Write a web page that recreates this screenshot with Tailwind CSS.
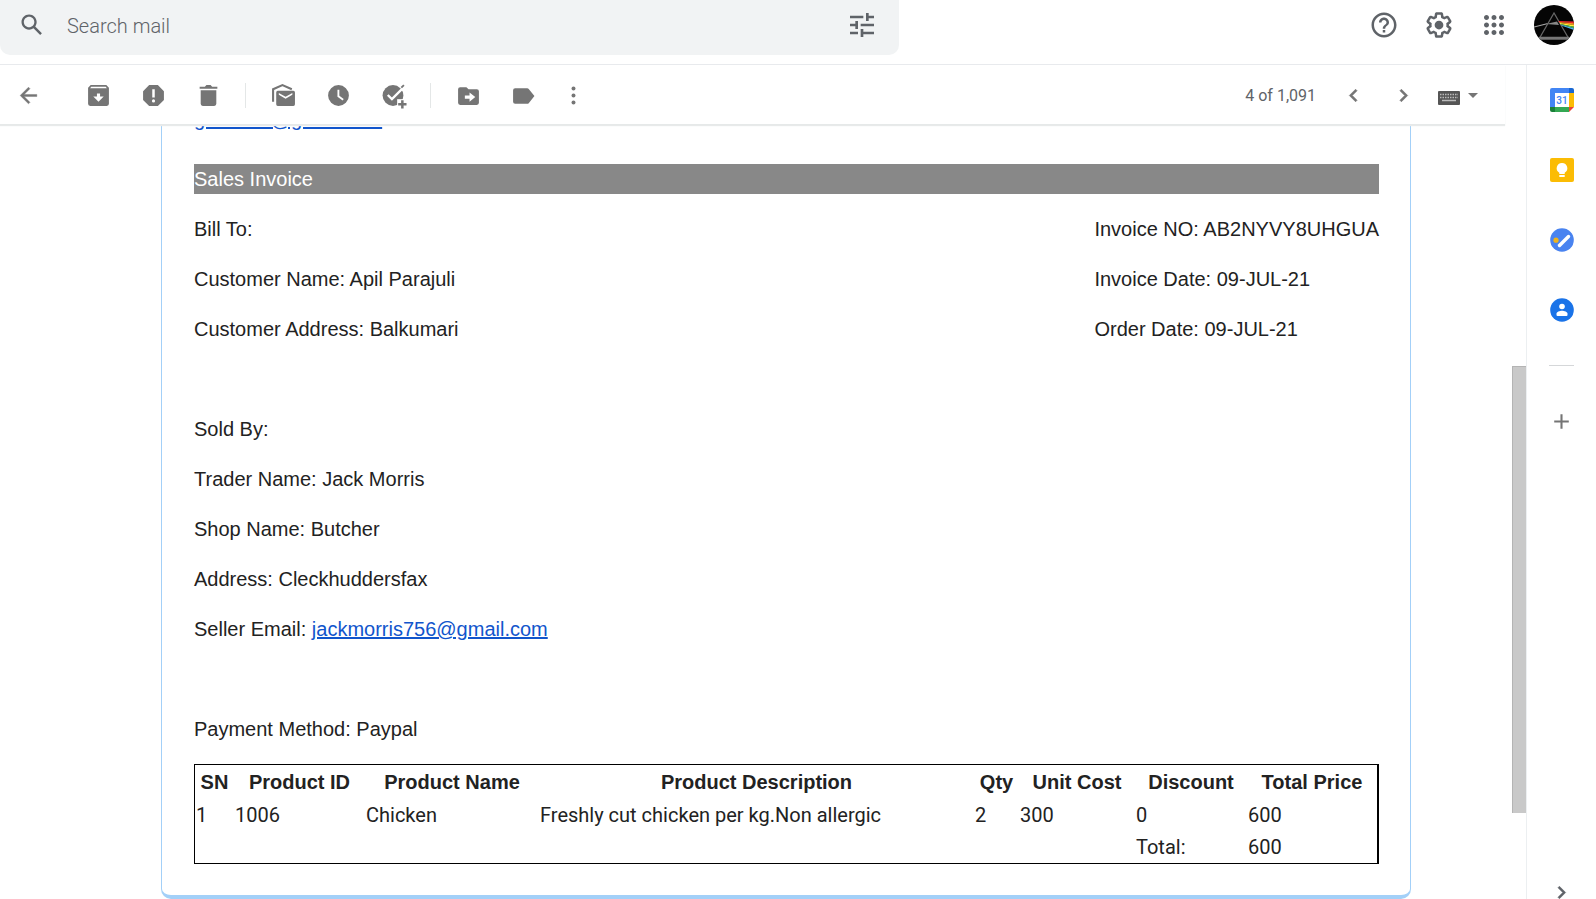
<!DOCTYPE html>
<html lang="en">
<head>
<meta charset="utf-8">
<title>Sales Invoice</title>
<script src="https://cdn.jsdelivr.net/npm/@tailwindcss/browser@4"></script>
</head>
<body class="flex h-screen flex-col overflow-hidden bg-white font-['Liberation_Sans',Arial,sans-serif] text-xl leading-[30px] text-[#222222]">

<header class="flex h-[65px] shrink-0 items-start justify-between border-b border-[#e8eaed] pr-[22px]">
  <form class="flex h-[55px] w-[899px] items-center rounded-b-[10px] bg-[#f1f3f4] pr-5 pl-[18px]">
    <button type="button" aria-label="Search" class="mb-1.5 text-[#5f6368]"><svg class="size-7 fill-current" viewBox="0 0 24 24"><path d="M20.49 19l-5.73-5.73C15.53 12.2 16 10.91 16 9.5 16 5.91 13.09 3 9.5 3S3 5.91 3 9.5 5.91 16 9.5 16c1.41 0 2.7-.47 3.77-1.24L19 20.49 20.49 19zM5 9.5C5 7.01 7.01 5 9.5 5S14 7.01 14 9.5 11.99 14 9.5 14 5 11.99 5 9.5z"/></svg></button>
    <input type="text" aria-label="Search mail" placeholder="Search mail" class="ml-[21px] flex-1 bg-transparent pb-[3px] font-[Roboto,sans-serif] text-xl font-light outline-none placeholder:text-[#5f6368]">
    <button type="button" aria-label="Show search options" class="mr-px mb-1.5 text-[#5f6368]"><svg class="size-8 fill-current" viewBox="0 0 24 24"><path d="M3 17v2h6v-2H3zM3 5v2h10V5H3zm10 16v-2h8v-2h-8v-2h-2v6h2zM7 9v2H3v2h4v2h2V9H7zm14 4v-2H11v2h10zm-6-4h2V7h4V5h-4V3h-2v6z"/></svg></button>
  </form>
  <div class="flex h-[50px] items-center gap-[25px] text-[#5f6368]">
    <button aria-label="Support"><svg class="size-[30px] fill-current" viewBox="0 0 24 24"><path d="M11 18h2v-2h-2v2zm1-16C6.480 2 2 6.480 2 12s4.480 10 10 10 10-4.480 10-10S17.520 2 12 2zm0 18c-4.410 0-8-3.590-8-8s3.590-8 8-8 8 3.590 8 8-3.590 8-8 8zm0-14c-2.210 0-4 1.790-4 4h2c0-1.100.9-2 2-2s2 .9 2 2c0 2-3 1.750-3 5h2c0-2.250 3-2.500 3-5 0-2.210-1.790-4-4-4z"/></svg></button>
    <button aria-label="Settings"><svg class="size-[30px] fill-current" viewBox="0 0 24 24"><path d="M13.85 22.25h-3.7c-.74 0-1.36-.54-1.45-1.27l-.27-1.89c-.27-.14-.53-.29-.79-.46l-1.8.72c-.7.26-1.47-.03-1.81-.65L2.2 15.53c-.35-.66-.2-1.44.36-1.88l1.53-1.19c-.01-.15-.02-.3-.02-.46 0-.15.01-.31.02-.46l-1.52-1.19c-.59-.45-.74-1.26-.37-1.88l1.85-3.19c.34-.62 1.11-.9 1.79-.63l1.81.73c.26-.17.52-.32.78-.46l.27-1.91c.09-.7.71-1.25 1.44-1.25h3.7c.74 0 1.36.54 1.45 1.27l.27 1.89c.27.14.53.29.79.46l1.8-.72c.71-.26 1.480.03 1.820.65l1.840 3.180c.36.66.2 1.440-.36 1.880l-1.520 1.190c.01.15.02.3.02.46s-.01.31-.02.46l1.520 1.190c.56.45.72 1.230.37 1.860l-1.860 3.220c-.34.62-1.110.9-1.800.63l-1.800-.72c-.26.17-.52.32-.78.46l-.27 1.910c-.1.68-.72 1.220-1.460 1.220zm-3.230-2h2.760l.37-2.550.53-.22c.44-.18.88-.44 1.340-.78l.45-.34 2.380.96 1.380-2.400-2.030-1.580.07-.56c.03-.26.06-.51.06-.78s-.03-.53-.06-.78l-.07-.56 2.030-1.580-1.390-2.400-2.390.96-.45-.35c-.42-.32-.87-.58-1.330-.77l-.52-.22-.37-2.550h-2.760l-.37 2.550-.53.21c-.44.19-.88.44-1.340.79l-.45.33-2.380-.95-1.390 2.390 2.030 1.580-.07.56a7 7 0 0 0-.06.79c0 .26.02.53.06.78l.07.56-2.030 1.580 1.380 2.400 2.390-.96.45.35c.43.33.86.58 1.330.77l.53.22.38 2.550z"/><circle cx="12" cy="12" r="3.500"/></svg></button>
    <button aria-label="Google apps"><svg class="size-[30px] fill-current" viewBox="0 0 24 24"><path d="M6 8c1.100 0 2-.9 2-2s-.9-2-2-2-2 .9-2 2 .9 2 2 2zm6 12c1.100 0 2-.9 2-2s-.9-2-2-2-2 .9-2 2 .9 2 2 2zm-6 0c1.100 0 2-.9 2-2s-.9-2-2-2-2 .9-2 2 .9 2 2 2zm0-6c1.100 0 2-.9 2-2s-.9-2-2-2-2 .9-2 2 .9 2 2 2zm6 0c1.100 0 2-.9 2-2s-.9-2-2-2-2 .9-2 2 .9 2 2 2zm4-8c0 1.100.9 2 2 2s2-.9 2-2-.9-2-2-2-2 .9-2 2zm-4 2c1.100 0 2-.9 2-2s-.9-2-2-2-2 .9-2 2 .9 2 2 2zm6 6c1.100 0 2-.9 2-2s-.9-2-2-2-2 .9-2 2 .9 2 2 2zm0 6c1.100 0 2-.9 2-2s-.9-2-2-2-2 .9-2 2 .9 2 2 2z"/></svg></button>
    <button aria-label="Account"><svg class="size-10" viewBox="0 0 40 40">
      <defs><clipPath id="disc"><circle cx="20" cy="20" r="20"/></clipPath></defs>
      <g clip-path="url(#disc)"><rect width="40" height="40" fill="#050505"/>
      <path d="M0 22L14 18.500" stroke="#aaa" stroke-width="1.200"/><path d="M12 19L23 16.500L25 20Z" fill="#888"/>
      <path d="M20 8L5 34H35Z" fill="none" stroke="#666" stroke-width="1.300"/><path d="M5 33H35" stroke="#777" stroke-width="2.500"/>
      <path d="M24.500 16L40 16.500V18.300L25 17Z" fill="#f0252c"/><path d="M25 17L40 18.300V20L26 18Z" fill="#ff8c1f"/><path d="M26 18L40 20V21.700L26 19Z" fill="#fff03a"/><path d="M26 19L40 21.700V23.200L27 19.800Z" fill="#4fc45a"/><path d="M27 19.800L40 23.200V25L28 20.800Z" fill="#4fb4f0"/></g>
    </svg></button>
  </div>
</header>

<div class="flex min-h-0 flex-1">
  <main class="relative flex min-w-0 flex-1 flex-col">
    <div class="z-10 mr-[21px] flex h-[60px] shrink-0 items-center border-b border-[#e6e9e9] bg-white pt-0.5 pr-[27px] pl-4 text-[#757575] shadow-[0_1px_1px_#e8eaea]">
      <button aria-label="Back to inbox"><svg class="size-[25px] fill-current" viewBox="0 0 24 24"><path stroke="currentColor" stroke-width=".4" d="M20 11H7.830l5.590-5.590L12 4l-8 8 8 8 1.410-1.410L7.830 13H20v-2z"/></svg></button>
      <div class="ml-[45px] flex gap-[30px]">
        <button aria-label="Archive"><svg class="size-[25px] fill-current" viewBox="0 0 24 24"><path fill-rule="evenodd" d="M4.500 2h15L22 4.500V20a2 2 0 0 1-2 2H4a2 2 0 0 1-2-2V4.500zM5 3.500L4 5h16l-1-1.500zM10.500 10v3H7l5 5 5-5h-3.500v-3z"/></svg></button>
        <button aria-label="Report spam"><svg class="size-[25px] fill-current" viewBox="0 0 24 24"><path fill-rule="evenodd" d="M7.800 2h8.400L22 7.800v8.400L16.200 22H7.800L2 16.200V7.800zM10.800 6v8h2.400V6zM12 15.700a1.500 1.500 0 1 0 0 3a1.500 1.500 0 0 0 0-3z"/></svg></button>
        <button aria-label="Delete"><svg class="size-[25px] fill-current" viewBox="0 0 24 24"><path d="M4.500 7h15v13a2 2 0 0 1-2 2h-11a2 2 0 0 1-2-2zM3.500 3.500H8.500L10 2h4l1.500 1.500h5v2h-17z"/></svg></button>
      </div>
      <span class="ml-6 h-[25px] w-px bg-[#e4e7e7]"></span>
      <div class="ml-[25px] flex gap-[30px]">
        <button aria-label="Mark as unread"><svg class="size-[25px] fill-current" viewBox="0 0 24 24"><path fill-rule="evenodd" d="M7 7.500h14.500a1.500 1.500 0 0 1 1.500 1.500v11.500a1.500 1.500 0 0 1-1.500 1.500H6.500A1.500 1.500 0 0 1 5 20.500V9A1.500 1.500 0 0 1 6.500 7.500zM7.500 9.500v1.800l6.500 3.700 6.500-3.700V9.500L14 13.200z"/><path d="M2 18V6L11 2l9 4" fill="none" stroke="currentColor" stroke-width="2"/></svg></button>
        <button aria-label="Snooze"><svg class="size-[25px] fill-current" viewBox="0 0 24 24"><path fill-rule="evenodd" d="M12 2a10 10 0 1 0 0 20a10 10 0 0 0 0-20zM11 6.500h1.800v5.800l4.200 3-1 1.500-5-3.500z"/></svg></button>
        <button aria-label="Add to tasks"><svg class="size-[25px] overflow-visible" viewBox="0 0 24 24"><circle cx="11.500" cy="12" r="10" fill="currentColor"/><path d="M6.500 11.500l4 4L22 4" fill="none" stroke="white" stroke-width="2.200"/><path d="M19.500 4.500l2.500-2.500" stroke="currentColor" stroke-width="1.800"/><path d="M15.500 15.500h9v9h-9z" fill="white"/><path d="M20.500 16.500v8M16.500 20.500h8" stroke="currentColor" stroke-width="2.400"/></svg></button>
      </div>
      <span class="ml-6 h-[25px] w-px bg-[#e4e7e7]"></span>
      <div class="ml-[25px] flex gap-[30px]">
        <button aria-label="Move to"><svg class="size-[25px] fill-current" viewBox="0 0 24 24"><path fill-rule="evenodd" d="M10 4H4a2 2 0 0 0-2 2v13a2 2 0 0 0 2 2h16a2 2 0 0 0 2-2V8a2 2 0 0 0-2-2h-8zM13 9l5.500 4.500L13 18v-3H8.500v-3H13z"/></svg></button>
        <button aria-label="Labels"><svg class="size-[25px] fill-current" viewBox="0 0 24 24"><path d="M4 5h11.500c.7 0 1.300.3 1.700.9L22.500 12.500l-5.300 6.600c-.4.600-1 .9-1.700.9H4a2 2 0 0 1-2-2V7a2 2 0 0 1 2-2z"/></svg></button>
      </div>
      <button aria-label="More" class="ml-[25px]"><svg class="size-[25px] fill-current" viewBox="0 0 24 24"><circle cx="12" cy="5.300" r="1.900"/><circle cx="12" cy="12" r="1.900"/><circle cx="12" cy="18.700" r="1.900"/></svg></button>
      <span class="ml-auto font-[Roboto,sans-serif] text-base text-[#5f6368]">4 of 1,091</span>
      <button aria-label="Newer" class="ml-[25px]"><svg class="size-[25px] fill-current" viewBox="0 0 24 24"><path stroke="currentColor" stroke-width=".6" d="M15.410 7.410L14 6l-6 6 6 6 1.410-1.410L10.830 12z"/></svg></button>
      <button aria-label="Older" class="ml-[25px]"><svg class="size-[25px] fill-current" viewBox="0 0 24 24"><path stroke="currentColor" stroke-width=".6" d="M10 6L8.590 7.410 13.170 12l-4.580 4.590L10 18l6-6z"/></svg></button>
      <button aria-label="Input tools" class="ml-[22px] flex items-center gap-2"><svg class="mt-1 h-[14px] w-[22px]" viewBox="0 0 22 14"><rect width="22" height="14" rx="1" fill="#555"/><path d="M2 3.500h18M2 6.500h18" stroke="#bbb" stroke-width="1.500" stroke-dasharray="1.500 1"/><path d="M4 9.500h14" stroke="#bbb" stroke-width="1.500"/></svg><svg class="h-[5px] w-[10px] fill-current" viewBox="0 0 10 5"><path d="M0 0h10L5 5z"/></svg></button>
    </div>

    <div class="flex min-h-0 flex-1 flex-col justify-end overflow-hidden pr-[115px] pl-[161px]">
      <article class="rounded-b-[10px] border-x border-b-4 border-[#a3d0f8] pr-[31px] pb-[31px] pl-8">
        <p class="mb-[30px]"><a href="#" class="text-[#1155cc] underline decoration-2">gocartuk@gmail.com</a></p>
        <h1 class="bg-[#888888] text-white">Sales Invoice</h1>
        <div class="mt-5 flex justify-between">
          <div class="space-y-5"><p>Bill To:</p><p>Customer Name: Apil Parajuli</p><p>Customer Address: Balkumari</p></div>
          <div class="space-y-5"><p>Invoice NO: AB2NYVY8UHGUA</p><p>Invoice Date: 09-JUL-21</p><p>Order Date: 09-JUL-21</p></div>
        </div>
        <div class="mt-[70px] space-y-5">
          <p>Sold By:</p><p>Trader Name: Jack Morris</p><p>Shop Name: Butcher</p><p>Address: Cleckhuddersfax</p>
          <p>Seller Email: <a href="#" class="text-[#1155cc] underline decoration-2">jackmorris756@gmail.com</a></p>
        </div>
        <p class="mt-[70px]">Payment Method: Paypal</p>
        <table class="mt-5 w-full table-fixed border-separate border-spacing-x-0 border-spacing-y-[2px] border border-r-2 border-black leading-7">
          <colgroup><col class="w-[39px]"><col class="w-[131px]"><col class="w-[174px]"><col><col class="w-[45px]"><col class="w-[116px]"><col class="w-[112px]"><col class="w-[130px]"></colgroup>
          <thead><tr class="*:p-px *:font-bold"><th>SN</th><th>Product ID</th><th>Product Name</th><th>Product Description</th><th>Qty</th><th>Unit Cost</th><th>Discount</th><th>Total Price</th></tr></thead>
          <tbody class="font-[Roboto,sans-serif] *:*:px-px *:*:pt-0.5">
            <tr><td>1</td><td>1006</td><td>Chicken</td><td>Freshly cut chicken per kg.Non allergic</td><td>2</td><td>300</td><td>0</td><td>600</td></tr>
            <tr><td></td><td></td><td></td><td></td><td></td><td></td><td>Total:</td><td>600</td></tr>
          </tbody>
        </table>
      </article>
    </div>
    <div class="absolute top-[301px] right-0 h-[447px] w-[14px] border-t border-l border-[#b4b4b4] bg-[#c9c9c9]"></div>
  </main>

  <aside class="flex w-[70px] shrink-0 flex-col items-center border-l border-[#eceff1] pt-[23px]">
    <button aria-label="Calendar"><svg class="size-6" viewBox="0 0 24 24"><path d="M2 0h17v5H5v14H0V2a2 2 0 0 1 2-2z" fill="#4285f4"/><path d="M19 0h3a2 2 0 0 1 2 2v3h-5z" fill="#1967d2"/><path d="M19 5h5v14h-5z" fill="#fbbc04"/><path d="M5 19h14v5H5z" fill="#34a853"/><path d="M0 19h5v5H2a2 2 0 0 1-2-2z" fill="#188038"/><path d="M19 19h5l-5 5z" fill="#ea4335"/><path d="M5 5h14v14H5z" fill="white"/><text x="12" y="15.500" text-anchor="middle" font-family="Roboto" font-size="10" font-weight="500" fill="#4285f4">31</text></svg></button>
    <button aria-label="Keep" class="mt-[46px]"><svg class="size-6" viewBox="0 0 24 24"><rect width="24" height="24" rx="2" fill="#fbbc04"/><path d="M12 5a5.200 5.200 0 0 0-2.700 9.700V16h5.400v-1.300A5.200 5.200 0 0 0 12 5zM9.300 17h5.400v2H9.300z" fill="white"/></svg></button>
    <button aria-label="Tasks" class="mt-[46px]"><svg class="size-6" viewBox="0 0 24 24"><circle cx="12" cy="12" r="11.800" fill="#4983f0"/><path d="M9.500 17.500L18.500 8.500" stroke="white" stroke-width="3.400" stroke-linecap="round"/><circle cx="6" cy="12.200" r="2.600" fill="#efb31b"/></svg></button>
    <button aria-label="Contacts" class="mt-[46px]"><svg class="size-6" viewBox="0 0 24 24"><circle cx="12" cy="12" r="11.800" fill="#1a73e8"/><circle cx="12" cy="8.500" r="2.800" fill="white"/><path d="M6.500 17v-1.200c0-2 3.200-3 5.500-3s5.500 1 5.500 3V17a1 1 0 0 1-1 1h-9a1 1 0 0 1-1-1z" fill="white"/></svg></button>
    <span class="mt-[43px] h-px w-[25px] bg-[#d5d7d9]"></span>
    <button aria-label="Get add-ons" class="mt-[43px] text-[#757575]"><svg class="size-[25px] fill-current" viewBox="0 0 24 24"><path d="M19 13h-6v6h-2v-6H5v-2h6V5h2v6h6z"/></svg></button>
    <button aria-label="Hide side panel" class="mt-auto -mb-[6px] text-[#5f6368]"><svg class="size-[25px] fill-current" viewBox="0 0 24 24"><path stroke="currentColor" stroke-width=".5" d="M10 6L8.590 7.410 13.170 12l-4.580 4.590L10 18l6-6z"/></svg></button>
  </aside>
</div>
</body>
</html>
